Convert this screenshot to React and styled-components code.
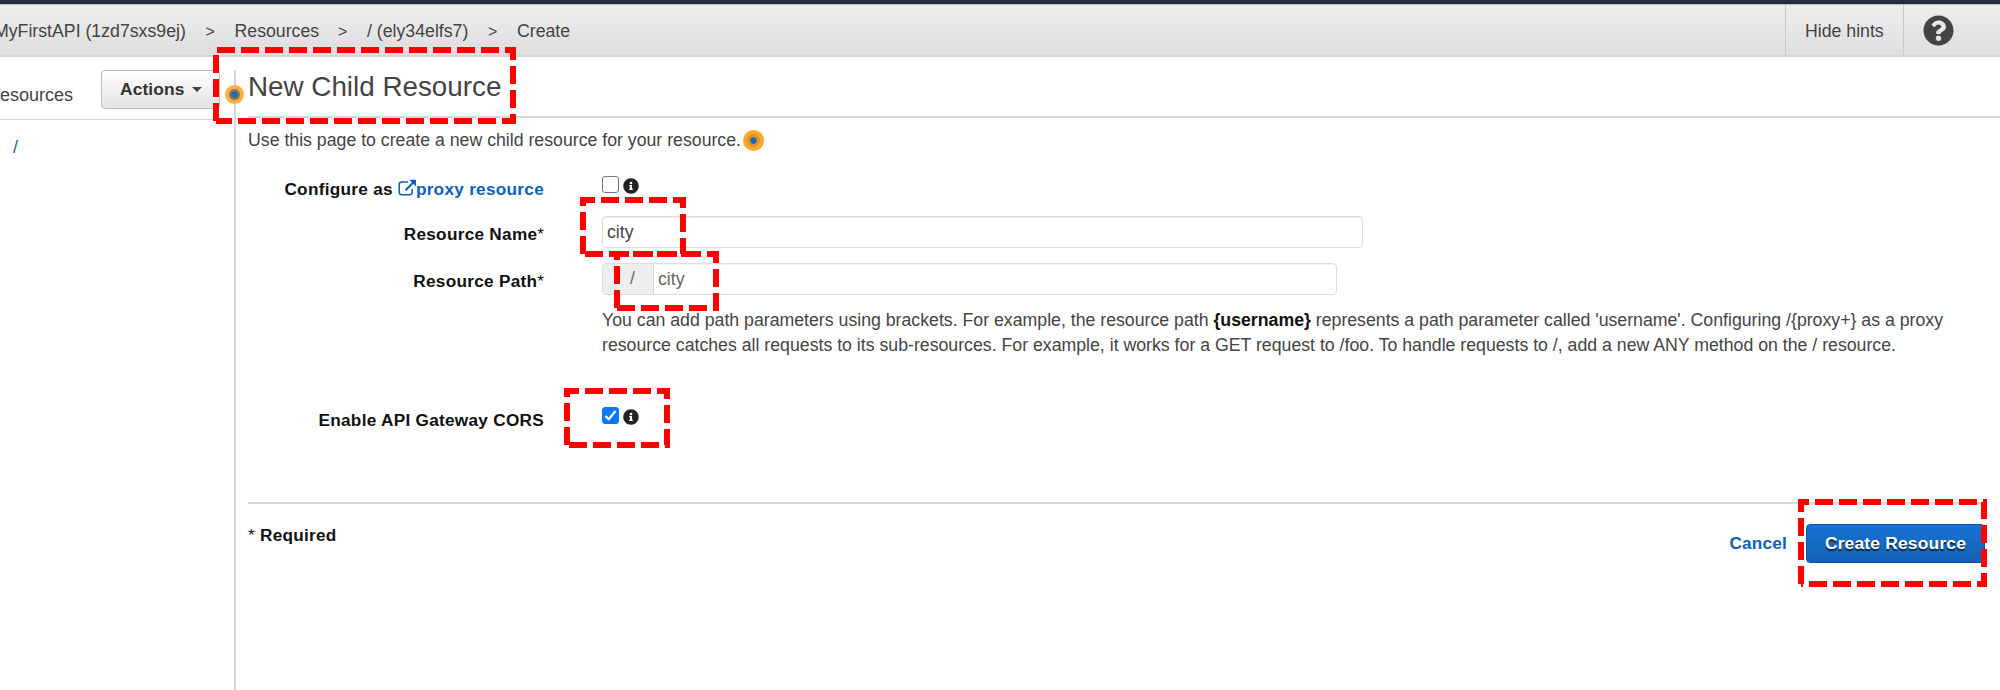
import React from "react";
import styled, { createGlobalStyle } from "styled-components";
import { FaInfoCircle, FaQuestionCircle } from "react-icons/fa";

const GlobalStyle = createGlobalStyle`
  * { box-sizing: border-box; }
  body {
    margin: 0;
    background: #fff;
    color: #444;
    font: 17.72px/25px "Liberation Sans", Arial, sans-serif;
    overflow: hidden;
  }
`;

const Page = styled.div`
  position: relative;
  width: 2000px;
  height: 690px;
  overflow: hidden;
  display: flex;
  flex-direction: column;
`;

const TopBar = styled.header`
  flex: none;
  height: 57px;
  padding-top: 1px;
  display: flex;
  border-top: 4px solid #232f3e;
  border-bottom: 2px solid #d5d5d5;
  background: linear-gradient(#eee, #dedede);
  box-shadow: inset 0 1px #b9bdc2;
`;

const Crumbs = styled.nav`
  flex: 1;
  display: flex;
  align-items: center;
  margin-left: -6px;
  padding-top: 2px;
  white-space: nowrap;
`;

const Crumb = styled.span`
  width: ${(p) => p.$w}px;
`;

const CrumbArrow = styled.span`
  width: 48px;
  padding-left: 19px;
  font-size: 16px;
`;

const HintsToggle = styled.div`
  width: 119px;
  padding: 2px 0 0 19px;
  display: flex;
  align-items: center;
  border-left: 1.5px solid #c8c8c8;
  border-right: 1.5px solid #c8c8c8;
`;

const HelpSlot = styled.div`
  width: 96px;
  padding-left: 19px;
  display: flex;
  align-items: center;
  font-size: 31px;
`;

const Body = styled.div`
  flex: 1;
  display: flex;
`;

const Sidebar = styled.aside`
  width: 234px;
  padding-top: 13px;
`;

const SidebarHead = styled.div`
  width: 218px;
  height: 50px;
  display: flex;
  justify-content: flex-end;
  border-bottom: 1.5px solid #d2d2d2;
  white-space: nowrap;
`;

const SidebarTitle = styled.span`
  margin: 13px 28px 0 0;
  font-size: 18px;
`;

const ActionsButton = styled.button`
  flex: none;
  width: 119px;
  height: 39px;
  margin-right: -2px;
  padding: 0 0 0 18px;
  display: flex;
  align-items: center;
  gap: 8px;
  border: 1.5px solid #bbb;
  border-radius: 4px;
  background: linear-gradient(#fff, #e3e3e3);
  color: #333;
  font: bold 17.4px "Liberation Sans", Arial, sans-serif;
  letter-spacing: 0.1px;
`;

const Caret = styled.span`
  border: 5px solid transparent;
  border-top-color: #444;
  border-bottom: 0;
`;

const TreeRoot = styled.div`
  padding: 15px 0 0 13px;
  color: #1166bb;
`;

const Main = styled.main`
  flex: 1;
  margin-top: 13px;
  padding-left: 12px;
  border-left: 2px solid #d6d6d6;
`;

const Title = styled.h1`
  height: 48px;
  margin: 0;
  padding-top: 1px;
  border-bottom: 2px solid #d8d8d8;
  color: #444;
  font-size: 27.8px;
  font-weight: 400;
  line-height: 32px;
`;

const Intro = styled.p`
  display: flex;
  align-items: center;
  gap: 2px;
  height: 25px;
  margin: 10px 0 0;
`;

const Hint = styled.span`
  flex: none;
  width: ${(p) => p.$size}px;
  height: ${(p) => p.$size}px;
  border-radius: 50%;
  background: radial-gradient(
    circle,
    #1268c4 0 2.5px,
    ${(p) => p.$ring} 4px,
    ${(p) => p.$ring} ${(p) => p.$glow - 1}px,
    ${(p) => p.$tone} ${(p) => p.$glow}px
  );
`;

const PinnedHint = styled(Hint)`
  position: absolute;
  left: 225px;
  top: 84.5px;
`;

const Row = styled.div`
  display: flex;
  height: ${(p) => p.$h}px;
`;

const Label = styled.div`
  width: 296px;
  margin-right: 58px;
  padding-top: ${(p) => p.$top}px;
  text-align: right;
  color: #111;
  font-weight: 700;
  font-size: 17.2px;
  letter-spacing: 0.28px;
  white-space: nowrap;
  sup { font-size: inherit; font-weight: 400; vertical-align: baseline; letter-spacing: 0; }
`;

const ProxyLink = styled.a`
  color: #0d5fbd;
  svg { vertical-align: -1px; margin-right: -1px; }
`;

const CheckGroup = styled.div`
  display: flex;
  padding-top: ${(p) => p.$top}px;
`;

const Check = styled.span`
  width: 17px;
  height: 17px;
  margin-right: 4px;
  display: grid;
  place-items: center;
  border: 1.5px solid ${(p) => (p.$on ? "#0b78f5" : "#777")};
  border-radius: 3px;
  background: ${(p) => (p.$on ? "#0b78f5" : "#fff")};
`;

const InfoIcon = styled(FaInfoCircle)`
  width: 16px;
  height: 16px;
  margin-top: 2px;
  color: #222;
`;

const Field = styled.div`
  width: ${(p) => p.$w}px;
  height: 32px;
  display: flex;
  align-items: center;
  border: 1.5px solid #ddd;
  border-radius: 4px;
  overflow: hidden;
  color: ${(p) => p.$tone};
  box-shadow: inset 0 1px 1px rgba(0, 0, 0, 0.06);
`;

const FieldPrefix = styled.span`
  width: 51px;
  height: 100%;
  padding-left: 27px;
  line-height: 29px;
  background: #eee;
  border-right: 1.5px solid #d5d5d5;
`;

const FieldText = styled.span`
  padding-left: 4px;
`;

const HelpText = styled.p`
  height: 50px;
  margin: 13px 0 0 354px;
  white-space: nowrap;
  b { color: #111; }
`;

const Footer = styled.footer`
  width: 1737px;
  margin-top: 80px;
  display: flex;
  border-top: 2px solid #d8d8d8;
`;

const Required = styled.div`
  flex: 1;
  padding-top: 19px;
  color: #111;
  font-weight: 700;
  font-size: 17.2px;
  letter-spacing: 0.25px;
  span { font-weight: 400; }
`;

const Cancel = styled.a`
  padding-top: 27px;
  margin-right: 19px;
  color: #0d5fbd;
  font-weight: 700;
  font-size: 17.2px;
  letter-spacing: 0.2px;
`;

const CreateButton = styled.button`
  width: 179px;
  height: 39px;
  margin-top: 20px;
  padding: 0;
  border: 1.5px solid #0d549e;
  border-radius: 4px;
  background: linear-gradient(#1673d4, #1162b5);
  color: #fff;
  font: bold 17.4px "Liberation Sans", Arial, sans-serif;
  letter-spacing: 0.2px;
  text-shadow: 0 1.5px 1px #123;
`;

const Marks = styled.svg`
  position: absolute;
  inset: 0;
  pointer-events: none;
`;

const highlights = [
  [216, 50, 513, 121],
  [583, 200, 683, 254],
  [617, 254, 716, 308],
  [567, 391, 667, 445],
  [1801, 502, 1984, 584],
];

const ExternalIcon = () => (
  <svg width="19" height="17" viewBox="0 0 19 17" fill="none" stroke="#0d5fbd">
    <path d="M10 3H4Q1.2 3 1.2 5.5V13Q1.2 15.8 4 15.8H11.5Q14.2 15.8 14.2 13V10" strokeWidth="1.5" />
    <path d="M7.5 11.2L15.5 3.2" strokeWidth="2.2" />
    <path d="M11.3 0.8H18V7.5Z" fill="#0d5fbd" stroke="none" />
  </svg>
);

const CheckField = ({ top, on }) => (
  <CheckGroup $top={top}>
    <Check $on={on}>
      {on && (
        <svg width="13" height="13" viewBox="0 0 13 13" fill="none" stroke="#fff" strokeWidth="2.3">
          <path d="M1.3 7L4.8 10.2L11.5 2" />
        </svg>
      )}
    </Check>
    <InfoIcon />
  </CheckGroup>
);

export default function App() {
  return (
    <Page>
      <GlobalStyle />
      <TopBar>
        <Crumbs>
          <Crumb $w={192.5}>MyFirstAPI (1zd7sxs9ej)</Crumb>
          <CrumbArrow>&gt;</CrumbArrow>
          <Crumb $w={84.5}>Resources</Crumb>
          <CrumbArrow>&gt;</CrumbArrow>
          <Crumb $w={102}>/ (ely34elfs7)</Crumb>
          <CrumbArrow>&gt;</CrumbArrow>
          <Crumb $w={60}>Create</Crumb>
        </Crumbs>
        <HintsToggle>Hide hints</HintsToggle>
        <HelpSlot><FaQuestionCircle color="#444" /></HelpSlot>
      </TopBar>
      <Body>
        <Sidebar>
          <SidebarHead>
            <SidebarTitle>Resources</SidebarTitle>
            <ActionsButton>Actions<Caret /></ActionsButton>
          </SidebarHead>
          <TreeRoot>/</TreeRoot>
        </Sidebar>
        <Main>
          <Title>New Child Resource</Title>
          <Intro>
            Use this page to create a new child resource for your resource.
            <Hint $size={21} $ring="#dc982c" $tone="#ffa928" $glow={7} />
          </Intro>
          <Row $h={63}>
            <Label $top={24}>Configure as <ProxyLink><ExternalIcon />proxy resource</ProxyLink></Label>
            <CheckField top={23} />
          </Row>
          <Row $h={47}>
            <Label $top={6}>Resource Name<sup>*</sup></Label>
            <Field $w={761} $tone="#444"><FieldText>city</FieldText></Field>
          </Row>
          <Row $h={32}>
            <Label $top={6}>Resource Path<sup>*</sup></Label>
            <Field $w={735} $tone="#666"><FieldPrefix>/</FieldPrefix><FieldText>city</FieldText></Field>
          </Row>
          <HelpText>
            You can add path parameters using brackets. For example, the resource path <b>{"{username}"}</b> represents a path parameter called 'username'. Configuring /{"{proxy+}"} as a proxy<br />
            resource catches all requests to its sub-resources. For example, it works for a GET request to /foo. To handle requests to /, add a new ANY method on the / resource.
          </HelpText>
          <Row $h={64}>
            <Label $top={50}>Enable API Gateway CORS</Label>
            <CheckField top={49} on />
          </Row>
          <Footer>
            <Required><span>*</span> Required</Required>
            <Cancel>Cancel</Cancel>
            <CreateButton>Create Resource</CreateButton>
          </Footer>
        </Main>
      </Body>
      <PinnedHint $size={19} $ring="#8f7a45" $tone="#ffb040" $glow={6} />
      <Marks width="2000" height="690" fill="none" stroke="#f00" strokeWidth="6" strokeDasharray="18 6">
        {highlights.map(([l, t, r, b]) => (
          <path key={`${l}-${t}`} d={`M${l} ${b}V${t}H${r}V${b}H${l}`} />
        ))}
      </Marks>
    </Page>
  );
}
